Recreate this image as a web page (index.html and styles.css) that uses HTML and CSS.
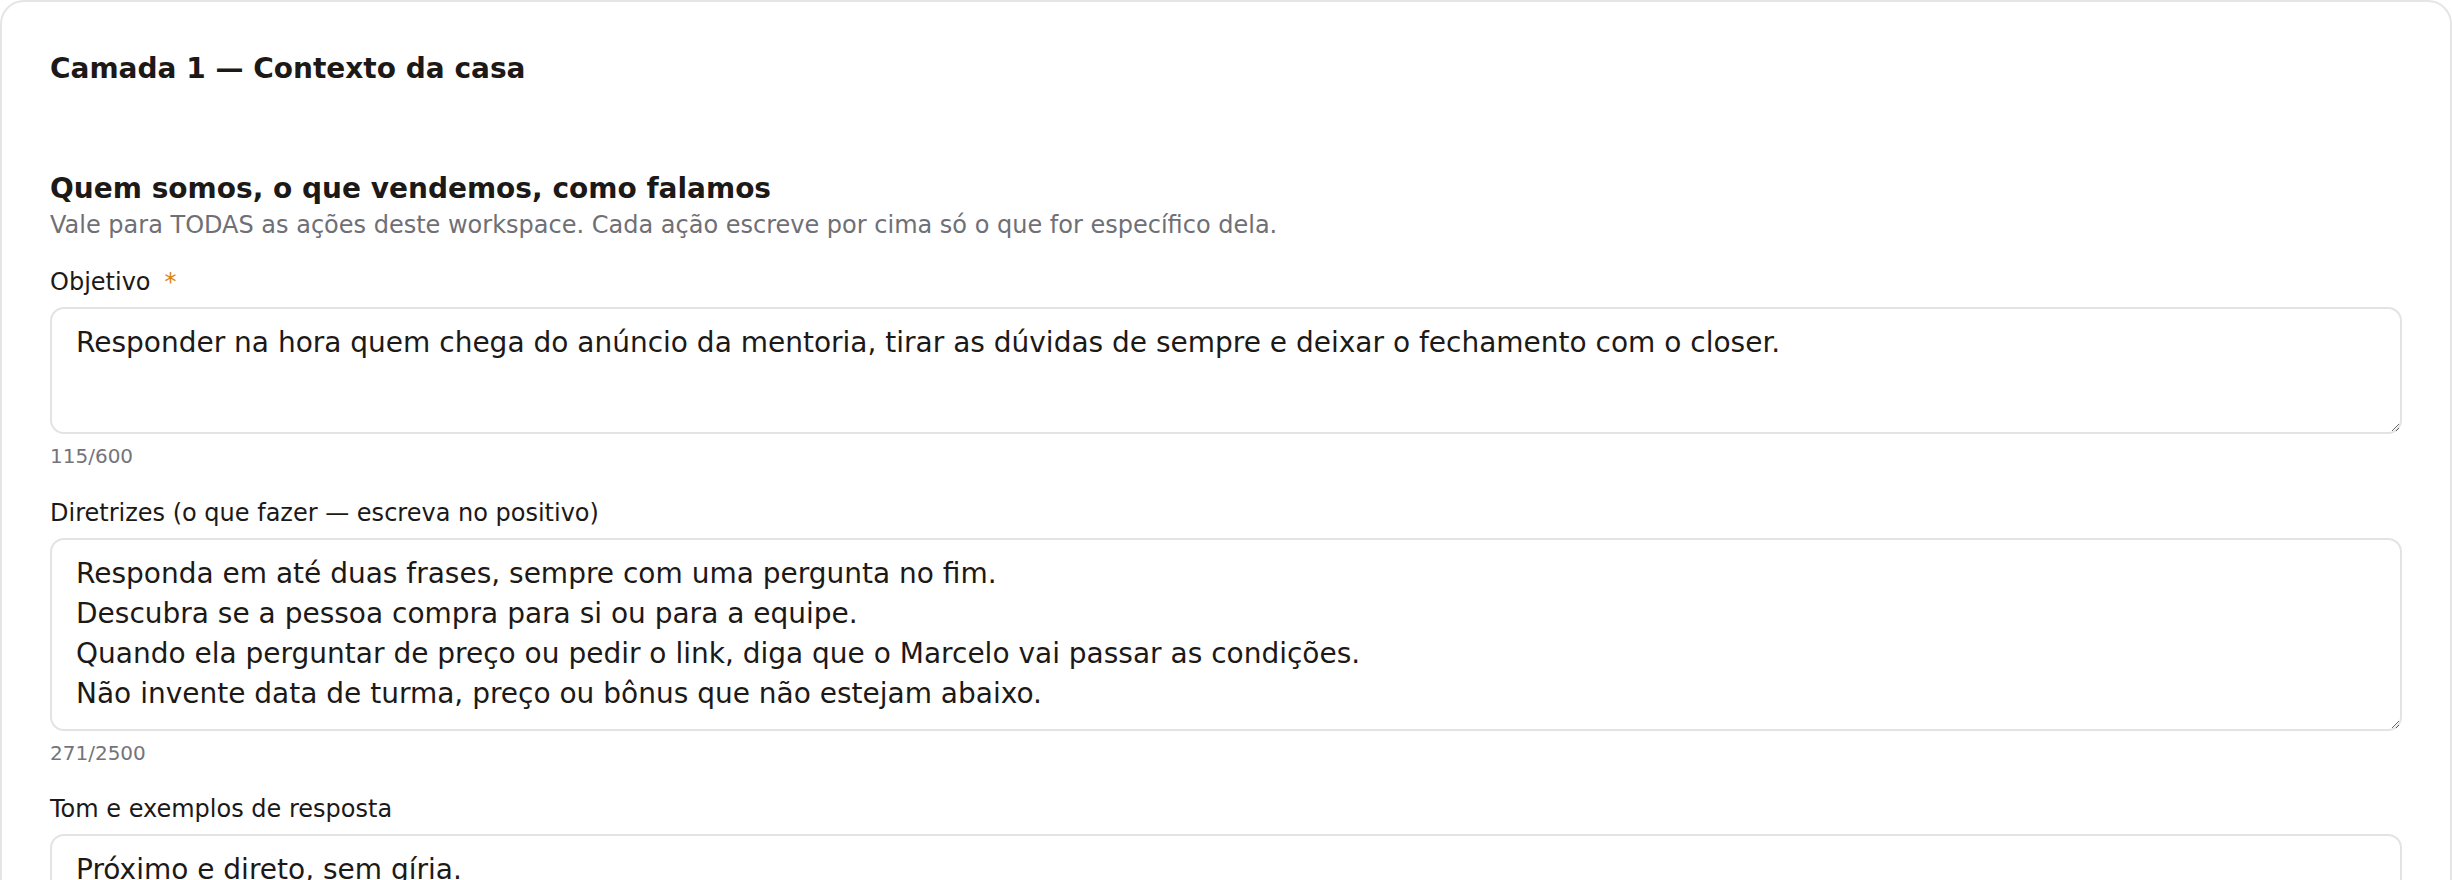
FILE: index.html
```html
<!DOCTYPE html>
<html lang="pt-BR">
<head>
<meta charset="utf-8">
<title>Camada 1 — Contexto da casa</title>
<link rel="stylesheet" href="styles.css">
</head>
<body>
<main class="card">
  <h1 class="card-title">Camada 1 — Contexto da casa</h1>
  <section class="section">
    <h2 class="section-title">Quem somos, o que vendemos, como falamos</h2>
    <p class="section-sub">Vale para TODAS as ações deste workspace. Cada ação escreve por cima só o que for específico dela.</p>
    <div class="fields">
      <div class="field">
        <label class="field-label" for="objetivo">Objetivo<span class="req">*</span></label>
        <textarea id="objetivo" class="field-input field-input--short">Responder na hora quem chega do anúncio da mentoria, tirar as dúvidas de sempre e deixar o fechamento com o closer.</textarea>
        <div class="field-count">115/600</div>
      </div>
      <div class="field">
        <label class="field-label" for="diretrizes">Diretrizes (o que fazer — escreva no positivo)</label>
        <textarea id="diretrizes" class="field-input" rows="4">Responda em até duas frases, sempre com uma pergunta no fim.
Descubra se a pessoa compra para si ou para a equipe.
Quando ela perguntar de preço ou pedir o link, diga que o Marcelo vai passar as condições.
Não invente data de turma, preço ou bônus que não estejam abaixo.</textarea>
        <div class="field-count">271/2500</div>
      </div>
      <div class="field">
        <label class="field-label" for="tom">Tom e exemplos de resposta</label>
        <textarea id="tom" class="field-input" rows="4">Próximo e direto, sem gíria.
Exemplo: "Oi! Que bom que você veio. Você está pensando na mentoria para você ou para o seu time?"
Exemplo: "Boa pergunta! Quem te passa os valores certinhos é o Marcelo, posso chamar ele?"</textarea>
        <div class="field-count">262/2500</div>
      </div>
    </div>
  </section>
</main>
</body>
</html>
```

FILE: styles.css
```css
* {
  box-sizing: border-box;
}

html, body {
  margin: 0;
  padding: 0;
  background: #ffffff;
}

body {
  font-family: "DejaVu Sans", Verdana, sans-serif;
  color: #1c1917;
}

.card {
  display: block;
  width: 100%;
  border: 2px solid #e5e5e5;
  border-radius: 24px;
  padding: 48px;
  background: #ffffff;
}

.card-title {
  margin: 0 0 82px;
  font-size: 28px;
  line-height: 38px;
  font-weight: 700;
  color: #1c1917;
}

.section-title {
  margin: 0;
  font-size: 28px;
  line-height: 38px;
  font-weight: 700;
  color: #1c1917;
}

.section-sub {
  margin: 0;
  font-size: 24px;
  line-height: 34px;
  color: #6f6f76;
}

.fields {
  display: flex;
  flex-direction: column;
  gap: 25.5px;
  margin-top: 23px;
}

.field {
  display: flex;
  flex-direction: column;
  gap: 8px;
}

.field-label {
  font-size: 24px;
  line-height: 34px;
  color: #1c1917;
}

.req {
  margin-left: 14px;
  color: #d9820f;
}

.field-input {
  display: block;
  width: 100%;
  font-family: "DejaVu Sans", Verdana, sans-serif;
  font-size: 28px;
  line-height: 40px;
  color: #1c1917;
  background: #ffffff;
  border: 2px solid #e3e3e3;
  border-radius: 14px;
  padding: 14px 24px 15px;
  outline: none;
  overflow: hidden;
}

.field-input--short {
  height: 127px;
}

.field-count {
  font-size: 20px;
  line-height: 28px;
  color: #74747a;
}
```
